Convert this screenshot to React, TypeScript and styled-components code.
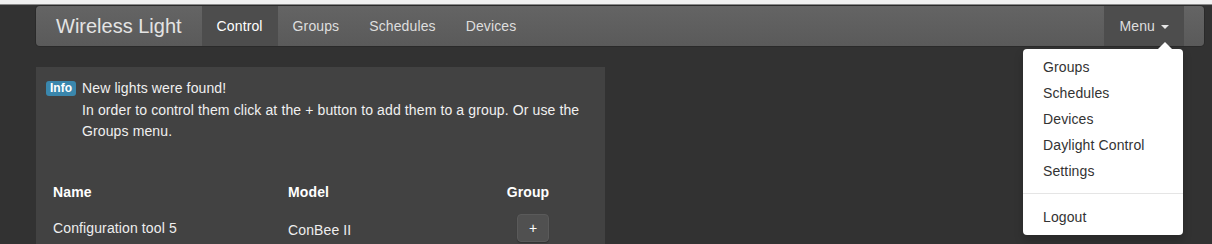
import React from "react";
import styled, { createGlobalStyle } from "styled-components";

const GlobalStyle = createGlobalStyle`
  html, body {
    margin: 0;
    padding: 0;
    background: #323232;
    font-family: "Liberation Sans", Arial, Helvetica, sans-serif;
    font-size: 14px;
    letter-spacing: 0.12px;
    color: #ececec;
  }
  #root { min-height: 244px; }
`;

const TopStrip = styled.div`
  height: 4px;
  background: #f0f0f0;
  border-bottom: 1px solid #8a8a8a;
`;

const Page = styled.div`
  padding: 1px 8px 0 36px;
`;

const Navbar = styled.nav`
  display: flex;
  align-items: stretch;
  height: 40px;
  border-radius: 4px;
  background: linear-gradient(to bottom, #646464 0%, #5a5a5a 100%);
  box-shadow: 0 0 0 1px rgba(20, 20, 20, 0.25);
`;

const Brand = styled.a`
  padding: 0 20px;
  font-size: 20px;
  line-height: 40px;
  letter-spacing: 0;
  color: #e4e4e4;
  text-decoration: none;
  border-radius: 4px 0 0 4px;
`;

const NavList = styled.ul`
  display: flex;
  list-style: none;
  margin: 0;
  padding: 0;
`;

const RightList = styled(NavList)`
  margin-left: auto;
  margin-right: 20px;
`;

const NavItem = styled.li<{ $active?: boolean }>`
  position: relative;
  background: ${(p) => (p.$active ? "#4d4d4d" : "transparent")};
`;

const NavLink = styled.a<{ $active?: boolean }>`
  display: block;
  padding: 10px 15px;
  line-height: 20px;
  color: ${(p) => (p.$active ? "#ffffff" : "#dedede")};
  text-decoration: none;
`;

const Caret = styled.span`
  display: inline-block;
  width: 0;
  height: 0;
  margin-left: 2px;
  vertical-align: middle;
  border-top: 4px solid #e6e6e6;
  border-left: 4px solid transparent;
  border-right: 4px solid transparent;
`;

const Dropdown = styled.ul`
  position: absolute;
  top: calc(100% + 3px);
  right: 1px;
  width: 160px;
  box-sizing: border-box;
  margin: 0;
  padding: 5px 0;
  list-style: none;
  background: #ffffff;
  border-radius: 4px;
  box-shadow: 0 5px 10px rgba(0, 0, 0, 0.2);
  z-index: 10;

  &::before {
    content: "";
    position: absolute;
    top: -7px;
    right: 11px;
    border-left: 7px solid transparent;
    border-right: 7px solid transparent;
    border-bottom: 7px solid #ffffff;
  }
`;

const DropItem = styled.li`
  a {
    display: block;
    padding: 3px 20px;
    line-height: 20px;
    color: #333333;
    text-decoration: none;
    white-space: nowrap;
  }
`;

const Divider = styled.li`
  height: 1px;
  margin: 9px 0 10px;
  background: #e5e5e5;
`;

const Panel = styled.section`
  margin-top: 21px;
  width: 569px;
  box-sizing: border-box;
  padding: 11px 10px 20px;
  background: #424242;
  min-height: 200px;
`;

const Alert = styled.div`
  display: flex;
  align-items: flex-start;
  gap: 6px;
  line-height: 21.5px;
  color: #f0f0f0;
`;

const Label = styled.span`
  flex: none;
  margin-top: 3px;
  padding: 2px 4px;
  font-size: 12px;
  line-height: 11px;
  font-weight: bold;
  letter-spacing: 0;
  color: #ffffff;
  background: #3a87ad;
  border-radius: 3px;
`;

const AlertText = styled.div`
  width: 502px;
`;

const Table = styled.div`
  display: grid;
  grid-template-columns: 235px 200px 94px;
  margin-top: 31px;
`;

const HeadCell = styled.div<{ $center?: boolean }>`
  padding: 8px 7px 4px;
  line-height: 20px;
  font-weight: bold;
  color: #ffffff;
  text-align: ${(p) => (p.$center ? "center" : "left")};
`;

const Cell = styled.div<{ $shift?: number }>`
  display: flex;
  align-items: center;
  padding: ${(p) => 8 + (p.$shift ?? 0)}px 7px ${(p) => 8 - (p.$shift ?? 0)}px;
  line-height: 20px;
  color: #eeeeee;
`;

const ButtonCell = styled.div`
  display: flex;
  justify-content: center;
  padding: 8px 0 8px 10px;
`;

const AddButton = styled.button`
  width: 32px;
  height: 28px;
  padding: 0;
  font-family: inherit;
  font-size: 14px;
  line-height: 20px;
  color: #ffffff;
  background: #505050;
  border: 1px solid #5a5a5a;
  border-radius: 4px;
  box-shadow: 0 1px 1px rgba(0, 0, 0, 0.25);
`;

const menuItems = ["Groups", "Schedules", "Devices", "Daylight Control", "Settings"];
const navItems = ["Control", "Groups", "Schedules", "Devices"];

export default function App() {
  return (
    <>
      <GlobalStyle />
      <TopStrip />
      <Page>
        <Navbar>
          <Brand href="#">Wireless Light</Brand>
          <NavList>
            {navItems.map((n, i) => (
              <NavItem key={n} $active={i === 0}>
                <NavLink href="#" $active={i === 0}>
                  {n}
                </NavLink>
              </NavItem>
            ))}
          </NavList>
          <RightList>
            <NavItem $active>
              <NavLink href="#">
                Menu <Caret />
              </NavLink>
              <Dropdown>
                {menuItems.map((m) => (
                  <DropItem key={m}>
                    <a href="#">{m}</a>
                  </DropItem>
                ))}
                <Divider />
                <DropItem>
                  <a href="#">Logout</a>
                </DropItem>
              </Dropdown>
            </NavItem>
          </RightList>
        </Navbar>
        <Panel>
          <Alert>
            <Label>Info</Label>
            <AlertText>
              New lights were found!
              <br />
              In order to control them click at the + button to add them to a group. Or use the Groups menu.
            </AlertText>
          </Alert>
          <Table>
            <HeadCell>Name</HeadCell>
            <HeadCell>Model</HeadCell>
            <HeadCell $center>Group</HeadCell>
            <Cell>Configuration tool 5</Cell>
            <Cell $shift={2}>ConBee II</Cell>
            <ButtonCell>
              <AddButton>+</AddButton>
            </ButtonCell>
          </Table>
        </Panel>
      </Page>
    </>
  );
}
